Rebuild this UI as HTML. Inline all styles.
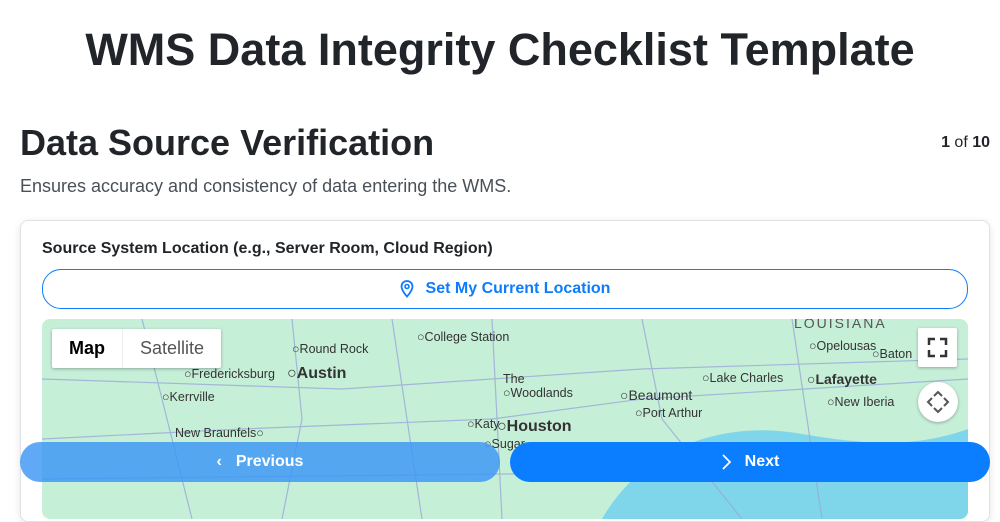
<!DOCTYPE html>
<html><head><style>
body{margin:0;width:1000px;height:500px;overflow:hidden;background:#fff;font-family:"Liberation Sans",sans-serif;color:#212529;position:relative}
h1{position:absolute;top:24px;left:0;width:1000px;text-align:center;margin:0;font-size:45px;font-weight:bold;line-height:52px}
h2{position:absolute;top:121px;left:20px;margin:0;font-size:36px;font-weight:bold;line-height:44px}
.cnt{position:absolute;top:134px;right:10px;font-size:16px}
.desc{position:absolute;top:176px;left:20px;font-size:18px;color:#495057}
.card{position:absolute;left:20px;top:220px;width:968px;height:300px;border:1px solid #dee2e6;border-radius:8px;box-shadow:0 2px 8px rgba(0,0,0,.1)}
.lbl{position:absolute;left:42px;top:240px;font-size:16px;font-weight:bold}
.loc{position:absolute;left:42px;top:269px;width:924px;height:38px;border:1px solid #0d7cff;border-radius:19px;color:#0d7cff;font-size:16px;font-weight:bold;display:flex;align-items:center;justify-content:center;gap:12px}
.map{position:absolute;left:42px;top:319px;width:926px;height:200px;background:#c6efd8;border-radius:8px;overflow:hidden}
.t{position:absolute;font-family:"Liberation Sans",sans-serif;font-size:12.5px;color:#333;white-space:nowrap}
.t.b{font-size:16px;font-weight:bold}
.mt{position:absolute;left:10px;top:10px;height:39px;background:#fff;display:flex;box-shadow:0 1px 3px rgba(0,0,0,.3);border-radius:2px}
.mt div{padding:0 17px;line-height:39px;font-size:18px}
.btn{position:absolute;top:442px;height:40px;border-radius:20px;color:#fff;font-size:16px;font-weight:bold;display:flex;align-items:center;justify-content:center;gap:14px}
.ctl{position:absolute;background:#fff;box-shadow:0 1px 3px rgba(0,0,0,.3)}
</style></head><body>
<h1>WMS Data Integrity Checklist Template</h1>
<h2>Data Source Verification</h2>
<div class="cnt"><b>1</b> of <b>10</b></div>
<div class="desc">Ensures accuracy and consistency of data entering the WMS.</div>
<div class="card"></div>
<div class="lbl">Source System Location (e.g., Server Room, Cloud Region)</div>
<div class="loc"><svg width="14" height="18" viewBox="0 0 14 18"><path d="M7 1C3.7 1 1.5 3.5 1.5 6.5 1.5 10.5 7 16.5 7 16.5S12.5 10.5 12.5 6.5C12.5 3.5 10.3 1 7 1Z" fill="none" stroke="#0d7cff" stroke-width="1.8"/><circle cx="7" cy="6.5" r="2" fill="none" stroke="#0d7cff" stroke-width="1.6"/></svg>Set My Current Location</div>
<div class="map">
<svg width="926" height="200" style="position:absolute;left:0;top:0">
<path d="M560 200 C600 130 680 100 760 115 C820 125 870 130 926 110 L926 200Z" fill="#7fd6ea"/>
<g stroke="#9aa8d8" stroke-width="1.2" fill="none" opacity=".8">
<path d="M0 120 L200 110 L450 100 L600 80 L926 60"/><path d="M250 0 L260 100 L240 200"/><path d="M450 0 L460 200"/><path d="M100 0 L150 200"/><path d="M0 60 L300 70 L600 50 L926 40"/><path d="M350 0 L380 200"/><path d="M600 0 L620 100 L700 200"/><path d="M0 160 L926 150"/><path d="M750 0 L780 200"/></g>
</svg>
<div class="mt"><div style="font-weight:bold;color:#000">Map</div><div style="color:#555;border-left:1px solid #eee">Satellite</div></div>
<span class="t" style="left:752px;top:-4px;font-size:14px;letter-spacing:2px;color:#555">LOUISIANA</span>
<span class="t" style="left:375px;top:11px">○College Station</span>
<span class="t" style="left:250px;top:23px">○Round Rock</span>
<span class="t" style="left:142px;top:48px">○Fredericksburg</span>
<span class="t b" style="left:245px;top:46px">○Austin</span>
<span class="t" style="left:120px;top:71px">○Kerrville</span>
<span class="t" style="left:133px;top:107px">New Braunfels○</span>
<span class="t" style="left:461px;top:53px">The<br>○Woodlands</span>
<span class="t" style="left:578px;top:68px;font-size:14px">○Beaumont</span>
<span class="t" style="left:593px;top:87px">○Port Arthur</span>
<span class="t" style="left:660px;top:52px">○Lake Charles</span>
<span class="t b" style="left:765px;top:52px;font-size:14px">○Lafayette</span>
<span class="t" style="left:767px;top:20px">○Opelousas</span>
<span class="t" style="left:830px;top:28px">○Baton</span>
<span class="t" style="left:785px;top:76px">○New Iberia</span>
<span class="t" style="left:425px;top:98px">○Katy</span>
<span class="t b" style="left:455px;top:99px">○Houston</span>
<span class="t" style="left:442px;top:118px">○Sugar</span>
<div class="ctl" style="left:876px;top:9px;width:39px;height:39px;border-radius:2px"><svg width="39" height="39"><path d="M11 17V11H17M22 11H28V17M28 22V28H22M17 28H11V22" stroke="#333" stroke-width="2.5" fill="none"/></svg></div>
<div class="ctl" style="left:876px;top:63px;width:40px;height:40px;border-radius:50%"><svg width="40" height="40"><path d="M16 14L20 10 24 14M16 26L20 30 24 26M14 16L10 20 14 24M26 16L30 20 26 24" stroke="#555" stroke-width="2" fill="none"/></svg></div>
</div>
<div class="btn" style="left:20px;width:480px;background:rgba(60,150,245,.82)"><span>‹</span>Previous</div>
<div class="btn" style="left:510px;width:480px;background:#0a7eff"><svg width="10" height="16"><path d="M2 1L9 8 2 15" stroke="#fff" stroke-width="1.8" fill="none"/></svg>Next</div>
</body></html>
